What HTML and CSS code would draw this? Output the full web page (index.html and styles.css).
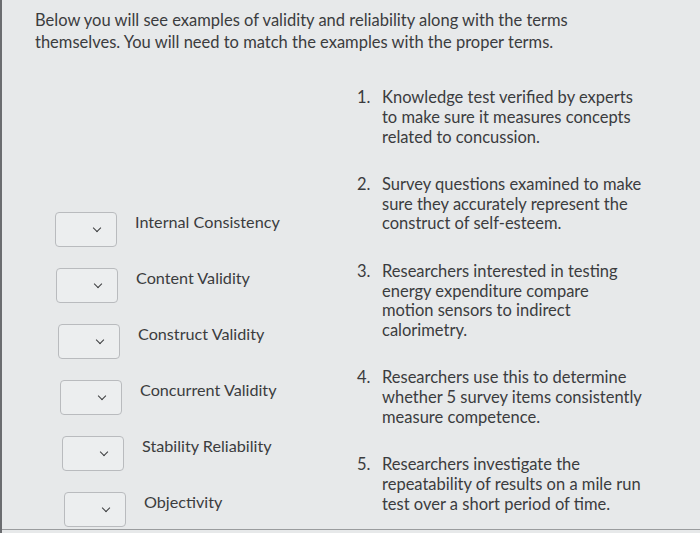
FILE: index.html
```html
<!DOCTYPE html>
<html>
<head>
<meta charset="utf-8">
<link rel="stylesheet" href="styles.css">
</head>
<body>
<div class="page">
  <p class="intro">Below you will see examples of validity and reliability along with the terms<br>themselves. You will need to match the examples with the proper terms.</p>
  <div class="main">
    <div class="terms">
      <div class="row"><div class="select"><span class="chev"></span></div><span class="label">Internal Consistency</span></div>
      <div class="row"><div class="select"><span class="chev"></span></div><span class="label">Content Validity</span></div>
      <div class="row"><div class="select"><span class="chev"></span></div><span class="label">Construct Validity</span></div>
      <div class="row"><div class="select"><span class="chev"></span></div><span class="label">Concurrent Validity</span></div>
      <div class="row"><div class="select"><span class="chev"></span></div><span class="label">Stability Reliability</span></div>
      <div class="row"><div class="select"><span class="chev"></span></div><span class="label">Objectivity</span></div>
    </div>
    <ol class="examples">
      <li><span class="num">1.</span><span class="txt">Knowledge test verified by experts<br>to make sure it measures concepts<br>related to concussion.</span></li>
      <li><span class="num">2.</span><span class="txt">Survey questions examined to make<br>sure they accurately represent the<br>construct of self-esteem.</span></li>
      <li><span class="num">3.</span><span class="txt">Researchers interested in testing<br>energy expenditure compare<br>motion sensors to indirect<br>calorimetry.</span></li>
      <li><span class="num">4.</span><span class="txt">Researchers use this to determine<br>whether 5 survey items consistently<br>measure competence.</span></li>
      <li><span class="num">5.</span><span class="txt">Researchers investigate the<br>repeatability of results on a mile run<br>test over a short period of time.</span></li>
    </ol>
  </div>
</div>
</body>
</html>
```
FILE: styles.css
```css
html, body {
  margin: 0;
  padding: 0;
}
body {
  width: 700px;
  height: 533px;
  background: #e7e9ea;
  font-family: Lato, "Open Sans", sans-serif;
  color: #3b3c3e;
  overflow: hidden;
  border-left: 2px solid #6b6d70;
  box-sizing: border-box;
}
.page {
  height: 530px;
  padding: 10px 0 0 33px;
  box-sizing: border-box;
  border-bottom: 1px solid #9a9c9e;
}
.intro {
  margin: 0;
  font-size: 16.5px;
  line-height: 21.5px;
}
.main {
  display: flex;
  margin-top: 35px;
}
.terms {
  width: 322px;
  padding: 124px 0 0 20px;
  box-sizing: border-box;
  display: flex;
  flex-direction: column;
  gap: 21px;
}
.row {
  display: flex;
  align-items: flex-start;
  gap: 18px;
}
.row:nth-child(2) { margin-left: 1px; }
.row:nth-child(3) { margin-left: 3px; }
.row:nth-child(4) { margin-left: 5px; }
.row:nth-child(5) { margin-left: 7px; }
.row:nth-child(6) { margin-left: 9px; }
.select {
  width: 62px;
  height: 35px;
  flex: none;
  box-sizing: border-box;
  border: 1px solid #b9bbbe;
  border-radius: 4px;
  background: #eceeef;
  position: relative;
}
.chev {
  position: absolute;
  left: 38px;
  top: 12px;
  width: 5px;
  height: 5px;
  border-right: 1.8px solid #3b3c3e;
  border-bottom: 1.8px solid #3b3c3e;
  transform: rotate(45deg);
}
.label {
  font-size: 16.2px;
  line-height: 20px;
  margin-top: 0;
}
.examples {
  list-style: none;
  margin: 0;
  padding: 0;
  display: flex;
  flex-direction: column;
  gap: 27.5px;
  font-size: 16.5px;
  line-height: 19.8px;
}
.examples li {
  display: flex;
}
.num {
  width: 25px;
  flex: none;
}
.txt {
  width: 300px;
}
```
